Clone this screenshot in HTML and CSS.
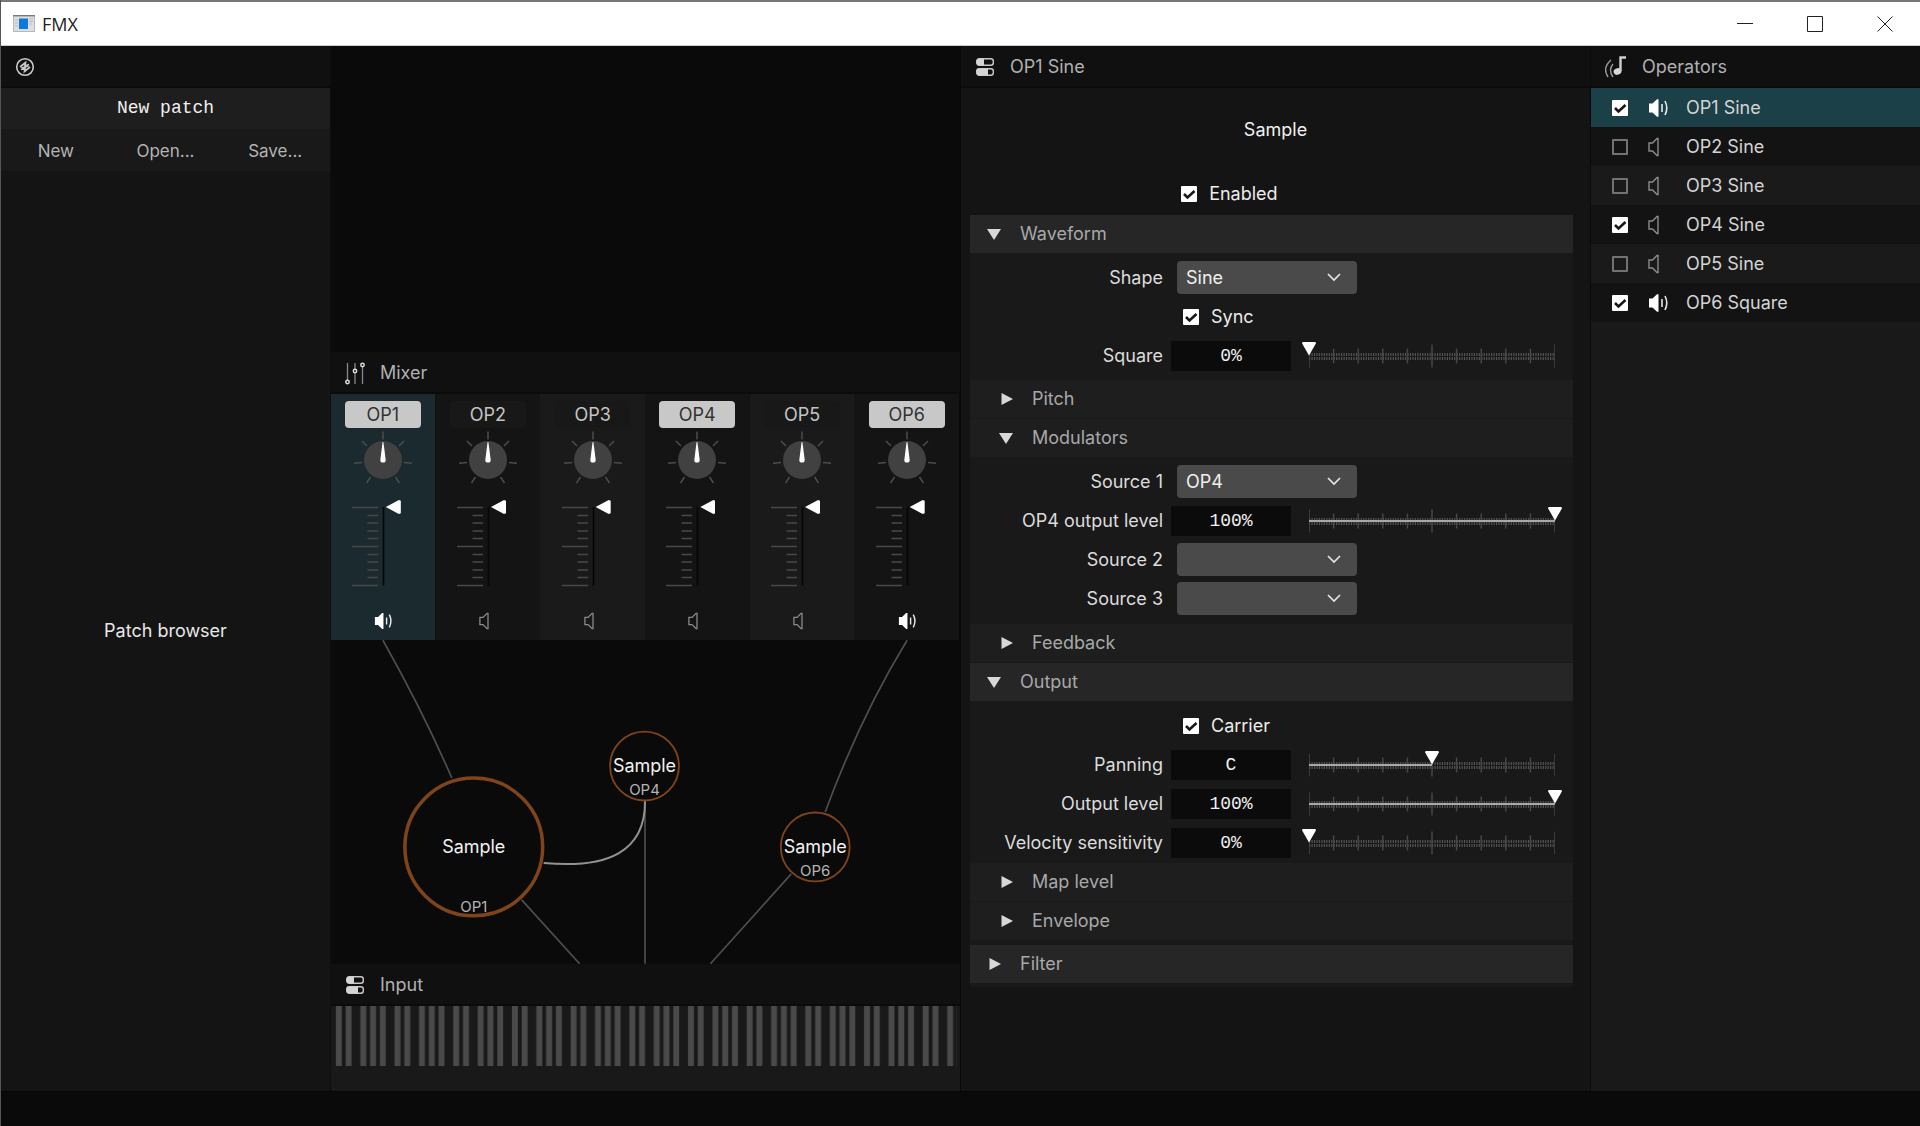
FILE: index.html
```html
<!DOCTYPE html>
<html lang="en">
<head>
<meta charset="utf-8">
<meta name="viewport" content="width=device-width, initial-scale=1">
<title>FMX</title>
<link rel="stylesheet" href="styles.css">
</head>
<body>
<svg class="defs" aria-hidden="true">
  <symbol id="speaker-on" viewBox="0 0 20 20"><path d="M1 5.500h3.500L9 1.200h1.500v17.600H9l-4.500-4.300H1z" fill="#fff"/><path d="M14 6v8M17 3q3.600 7 0 14" fill="none" stroke="#e8e8e8" stroke-width="1.600"/></symbol>
  <symbol id="speaker-off" viewBox="0 0 20 20"><path d="M1 6h3.500L9 1.500h1v17H9L4.500 14H1z" fill="none" stroke="#8c8c8c" stroke-width="1.400"/></symbol>
  <symbol id="toggles" viewBox="0 0 20 20"><rect x="1.700" y="1.700" width="16.600" height="6.600" rx="2.500" fill="none" stroke="#c8c8c8" stroke-width="1.400"/><path d="M3.500 1.700H9v6.600H3.500q-1.800 0-1.800-3.300t1.800-3.300z" fill="#d4d4d4"/><rect x="1.700" y="11.700" width="16.600" height="6.600" rx="2.500" fill="none" stroke="#c8c8c8" stroke-width="1.400"/><path d="M3.500 11.700H13v6.600H3.500q-1.800 0-1.800-3.300t1.800-3.300z" fill="#d4d4d4"/></symbol>
  <symbol id="down" viewBox="0 0 14 14"><path d="M0 2h14L7 13z" fill="#d8d8d8"/></symbol>
  <symbol id="right" viewBox="0 0 14 14"><path d="M2.500 1v12L14 7z" fill="#d8d8d8"/></symbol>
  <symbol id="knob" viewBox="0 0 60 60">
    <circle cx="30" cy="32" r="19" fill="#414141"/>
    <path d="M30 3.500v8M14 18l-5-5M46 18l5-5M9 34.500l-8 .800M51 34.500l8 .800M17.500 49l-4 6M42.500 49l4 6" stroke="#4c4c4c" stroke-width="1.500" fill="none"/>
    <path d="M29.600 14h.800L32.700 32q0 2.600-2.700 2.600T27.300 32z" fill="#fff"/>
  </symbol>
  <symbol id="fader" viewBox="0 0 35 92">
    <path d="M2 7.500h26M2 46.500h26M2 85.500h26M17.500 15.500h10.500M17.500 23h10.500M17.500 31h10.500M17.500 38.500h10.500M17.500 54.500h10.500M17.500 62h10.500M17.500 70h10.500M17.500 77.500h10.500" stroke="#484848" stroke-width="1.300"/>
    <path d="M33.500 7v78.500" stroke="#050505" stroke-width="1.600"/>
  </symbol>
  <symbol id="scale" viewBox="0 0 1000 24" preserveAspectRatio="none">
    <path d="M0 10.500H1000M0 14.500H1000" stroke="#525252" stroke-width="3" stroke-dasharray="5 5"/>
    <path d="M0 .500v23M500 .500v23M1000 .500v23M100 4.500v15M200 4.500v15M300 4.500v15M400 4.500v15M600 4.500v15M700 4.500v15M800 4.500v15M900 4.500v15" stroke="#464646" stroke-width="1.500" vector-effect="non-scaling-stroke"/>
  </symbol>
</svg>

<div class="window">
  <header class="titlebar">
    <svg class="app-icon" width="22" height="17" viewBox="0 0 22 17" aria-hidden="true"><rect x=".500" y=".500" width="21" height="16" fill="#dedede" stroke="#b8b8b8"/><path d="M0 .700h22" stroke="#777" stroke-width="1.400"/><path d="M2 5h3M2 8h3M2 11h3M16 4h4M16 6.500h4M16 9h3" stroke="#bbb"/><rect x="6" y="3.500" width="9" height="10.500" fill="#0a7adf"/></svg>
    <h1>FMX</h1>
    <div class="window-buttons">
      <button aria-label="Minimize"><svg width="16" height="16"><path d="M0 7.500h16" stroke="#222" fill="none"/></svg></button>
      <button aria-label="Maximize"><svg width="16" height="16"><path d="M.500.500h15v15h-15z" stroke="#222" fill="none"/></svg></button>
      <button aria-label="Close"><svg width="16" height="16"><path d="M.500.500l15 15M15.500.500l-15 15" stroke="#222" fill="none"/></svg></button>
    </div>
  </header>

  <main class="workspace">
    <section class="column patches" aria-label="Patches">
      <div class="panel-head"><svg width="20" height="20" viewBox="0 0 20 20" fill="none"><circle cx="10" cy="10" r="8.300" stroke="#ccc" stroke-width="1.600"/><path d="M5 10l5.500-4.500-.500 3.500 4-1.500M6 12.500l4-1.500-.500 3.500L15 10M6.500 11l7-2" stroke="#c8c8c8" stroke-width="1.700"/></svg></div>
      <div class="patch-name">New patch</div>
      <div class="patch-actions"><button>New</button><button>Open...</button><button>Save...</button></div>
      <div class="patch-browser">Patch browser</div>
    </section>

    <section class="column center">
      <div class="display"></div>
      <h2 class="panel-head"><svg width="20" height="24" viewBox="0 0 20 24" fill="none" stroke="#888" stroke-width="1.300"><path d="M2.500 2v17M10 2v6M10 12v11M17.500 6v17"/><g stroke="#ddd" stroke-width="1.500"><circle cx="2.500" cy="21" r="1.700"/><circle cx="10" cy="10" r="1.700"/><circle cx="17.500" cy="4" r="1.700"/></g></svg>Mixer</h2>
      <div class="mixer">
        <div class="channel selected"><button class="op on">OP1</button><label class="knob"><svg><use href="#knob"/></svg><input type="range" aria-label="OP1 pan"></label><div class="fader"><svg><use href="#fader"/></svg><input type="range" value="100" aria-label="OP1 level"></div><button class="mute" aria-label="OP1 output"><svg><use href="#speaker-on"/></svg></button></div>
        <div class="channel"><button class="op">OP2</button><label class="knob"><svg><use href="#knob"/></svg><input type="range" aria-label="OP2 pan"></label><div class="fader"><svg><use href="#fader"/></svg><input type="range" value="100" aria-label="OP2 level"></div><button class="mute" aria-label="OP2 output"><svg><use href="#speaker-off"/></svg></button></div>
        <div class="channel"><button class="op">OP3</button><label class="knob"><svg><use href="#knob"/></svg><input type="range" aria-label="OP3 pan"></label><div class="fader"><svg><use href="#fader"/></svg><input type="range" value="100" aria-label="OP3 level"></div><button class="mute" aria-label="OP3 output"><svg><use href="#speaker-off"/></svg></button></div>
        <div class="channel"><button class="op on">OP4</button><label class="knob"><svg><use href="#knob"/></svg><input type="range" aria-label="OP4 pan"></label><div class="fader"><svg><use href="#fader"/></svg><input type="range" value="100" aria-label="OP4 level"></div><button class="mute" aria-label="OP4 output"><svg><use href="#speaker-off"/></svg></button></div>
        <div class="channel"><button class="op">OP5</button><label class="knob"><svg><use href="#knob"/></svg><input type="range" aria-label="OP5 pan"></label><div class="fader"><svg><use href="#fader"/></svg><input type="range" value="100" aria-label="OP5 level"></div><button class="mute" aria-label="OP5 output"><svg><use href="#speaker-off"/></svg></button></div>
        <div class="channel"><button class="op on">OP6</button><label class="knob"><svg><use href="#knob"/></svg><input type="range" aria-label="OP6 pan"></label><div class="fader"><svg><use href="#fader"/></svg><input type="range" value="100" aria-label="OP6 level"></div><button class="mute" aria-label="OP6 output"><svg><use href="#speaker-on"/></svg></button></div>
      </div>
      <svg class="graph" viewBox="0 0 630 324">
        <g fill="none" stroke="#4e4e4e" stroke-width="1.700">
          <path d="M52 0Q93 73 121 138M577 0Q530 77 495 172M314.500 161v163M191 260l58 64M461 234l-81 90"/>
          <path d="M314.500 161C315 212 277 229 213 223" stroke="#929292" stroke-width="2"/>
        </g>
        <g fill="none" stroke="#80441a"><circle cx="143" cy="207" r="69" stroke-width="3.500"/><circle cx="314" cy="126" r="34.500" stroke-width="1.800"/><circle cx="485" cy="207" r="34.500" stroke-width="1.800"/></g>
        <g class="node-name"><text x="143" y="213">Sample</text><text x="314" y="132">Sample</text><text x="485" y="213">Sample</text></g>
        <g class="node-op"><text x="143" y="272">OP1</text><text x="314" y="155">OP4</text><text x="485" y="236">OP6</text></g>
      </svg>
      <h2 class="panel-head"><svg width="20" height="20"><use href="#toggles"/></svg>Input</h2>
      <div class="keyboard">
        <svg viewBox="0 0 1280 60" preserveAspectRatio="none" aria-label="Keyboard">
          <pattern id="octave" width="120" height="60" patternUnits="userSpaceOnUse"><path d="M10 0h12v60H10zM30 0h12v60H30zM60 0h12v60H60zM80 0h12v60H80zM100 0h12v60H100z" fill="#4a4a4a"/></pattern>
          <rect width="1280" height="60" fill="url(#octave)"/>
        </svg>
      </div>
    </section>

    <section class="column operator">
      <h2 class="panel-head"><svg width="20" height="20"><use href="#toggles"/></svg>OP1 Sine</h2>
      <div class="operator-name">Sample</div>
      <label class="check enabled"><input type="checkbox" checked>Enabled</label>
      <div class="sections">
        <button class="section" aria-expanded="true"><svg><use href="#down"/></svg>Waveform</button>
        <div class="fields waveform">
          <div class="row"><label for="shape">Shape</label><select id="shape"><option>Sine</option><option>Square</option></select></div>
          <div class="row"><label class="check"><input type="checkbox" checked>Sync</label></div>
          <div class="row"><label for="square">Square</label><input class="value" id="square" value="0%"><div class="slider"><svg><use href="#scale"/></svg><span class="fill" style="width:0%"></span><input type="range" value="0" aria-label="Square"></div></div>
        </div>
        <button class="section sub" aria-expanded="false"><svg><use href="#right"/></svg>Pitch</button>
        <button class="section sub" aria-expanded="true"><svg><use href="#down"/></svg>Modulators</button>
        <div class="fields modulators">
          <div class="row"><label for="source1">Source 1</label><select id="source1"><option>OP4</option></select></div>
          <div class="row"><label for="op4level">OP4 output level</label><input class="value" id="op4level" value="100%"><div class="slider"><svg><use href="#scale"/></svg><span class="fill" style="width:100%"></span><input type="range" value="100" aria-label="OP4 output level"></div></div>
          <div class="row"><label for="source2">Source 2</label><select id="source2"><option></option></select></div>
          <div class="row"><label for="source3">Source 3</label><select id="source3"><option></option></select></div>
        </div>
        <button class="section sub" aria-expanded="false"><svg><use href="#right"/></svg>Feedback</button>
        <button class="section" aria-expanded="true"><svg><use href="#down"/></svg>Output</button>
        <div class="fields output">
          <div class="row"><label class="check"><input type="checkbox" checked>Carrier</label></div>
          <div class="row"><label for="panning">Panning</label><input class="value" id="panning" value="C"><div class="slider"><svg><use href="#scale"/></svg><span class="fill" style="width:50%"></span><input type="range" value="50" aria-label="Panning"></div></div>
          <div class="row"><label for="level">Output level</label><input class="value" id="level" value="100%"><div class="slider"><svg><use href="#scale"/></svg><span class="fill" style="width:100%"></span><input type="range" value="100" aria-label="Output level"></div></div>
          <div class="row"><label for="velocity">Velocity sensitivity</label><input class="value" id="velocity" value="0%"><div class="slider"><svg><use href="#scale"/></svg><span class="fill" style="width:0%"></span><input type="range" value="0" aria-label="Velocity sensitivity"></div></div>
        </div>
        <button class="section sub" aria-expanded="false"><svg><use href="#right"/></svg>Map level</button>
        <button class="section sub" aria-expanded="false"><svg><use href="#right"/></svg>Envelope</button>
        <button class="section filter" aria-expanded="false"><svg><use href="#right"/></svg>Filter</button>
      </div>
    </section>

    <section class="column operators">
      <h2 class="panel-head"><svg width="22" height="24" viewBox="0 0 22 24"><ellipse cx="12.500" cy="16.500" rx="4" ry="3.200" transform="rotate(-20 12.500 16.500)" fill="#d8d8d8"/><path d="M15.500 16V2.500H21" fill="none" stroke="#d0d0d0" stroke-width="2.400"/><path d="M8 9q-5 6 0 13M6 5q-9 8-3 17" fill="none" stroke="#999" stroke-width="1.400"/></svg>Operators</h2>
      <ul>
        <li class="selected"><label class="check"><input type="checkbox" checked><svg><use href="#speaker-on"/></svg>OP1 Sine</label></li>
        <li><label class="check"><input type="checkbox"><svg><use href="#speaker-off"/></svg>OP2 Sine</label></li>
        <li><label class="check"><input type="checkbox"><svg><use href="#speaker-off"/></svg>OP3 Sine</label></li>
        <li><label class="check"><input type="checkbox" checked><svg><use href="#speaker-off"/></svg>OP4 Sine</label></li>
        <li><label class="check"><input type="checkbox"><svg><use href="#speaker-off"/></svg>OP5 Sine</label></li>
        <li><label class="check"><input type="checkbox" checked><svg><use href="#speaker-on"/></svg>OP6 Square</label></li>
      </ul>
    </section>
  </main>
  <footer class="status"></footer>
</div>
</body>
</html>
```
FILE: styles.css
```css
* { box-sizing: border-box; }
body {
  margin: 0;
  background: #0a0a0a;
  color: #dcdcdc;
  font: 18px/24px Inter, sans-serif;
}
button, input, select { font: inherit; color: inherit; margin: 0; }
button { border: 0; padding: 0; background: none; }
h1, h2, ul { margin: 0; padding: 0; font: inherit; list-style: none; }
svg { display: block; flex: none; }
.defs { position: absolute; width: 0; height: 0; }

.window {
  display: flex;
  flex-direction: column;
  min-height: 100vh;
  border-left: 1px solid #555;
}
.titlebar {
  display: flex;
  align-items: center;
  gap: 7px;
  height: 46px;
  padding-left: 12px;
  background: #fff;
  border-top: 2px solid #777;
  border-bottom: 1px solid #ccc;
  color: #222;
  font: 18px/24px "Open Sans", sans-serif;
}
.window-buttons { display: flex; margin-left: auto; }
.window-buttons button { display: grid; place-items: center; width: 70px; height: 42px; }

.workspace {
  flex: 1;
  display: grid;
  grid-template-columns: 330fr 630fr 630fr 329fr;
}
.column { display: flex; flex-direction: column; min-width: 0; background: #141414; }
.panel-head {
  display: flex;
  align-items: center;
  gap: 15px;
  height: 42px;
  padding: 2px 14px 0;
  background: #101010;
  border-bottom: 2px solid #0b0b0b;
  color: #b0b0b0;
}

.patches { border-right: 1px solid #0e0e0e; }
.patch-name {
  background: #1e1e1e;
  font: 18px/41px "Liberation Mono", monospace;
  text-align: center;
  color: #f0f0f0;
}
.patch-actions { display: grid; grid-template-columns: repeat(3, 1fr); background: #191919; }
.patch-actions button { height: 42px; padding-top: 2px; color: #b4b4b4; font-size: 17px; }
.patch-browser { flex: 1; display: grid; place-items: center; color: #e8e8e8; }

.center { background: #0a0a0a; border-right: 1px solid #080808; }
.display { height: 306px; }
.mixer {
  display: grid;
  grid-template-columns: repeat(6, 1fr);
  height: 246px;
  padding-right: 1px;
}
.channel {
  display: flex;
  flex-direction: column;
  align-items: center;
  padding-top: 7px;
  background: #141414;
}
.channel:nth-child(odd) { background: #1a1a1a; }
.channel.selected { background: #1a2a2f; border-right: 1px solid #101010; }
.op { width: 76px; height: 27px; border-radius: 4px; background: #181818; color: #c4c4c4; }
.op.on { background: #c8c8c8; color: #333; }
.knob { display: grid; width: 60px; height: 60px; }
.knob svg, .knob input { grid-area: 1 / 1; width: 60px; height: 60px; }
.knob input { opacity: 0; }
.fader { display: flex; width: 66px; height: 92px; margin-top: 12px; gap: 1px; }
.fader svg { width: 35px; height: 92px; }
.fader input {
  appearance: none;
  writing-mode: vertical-lr;
  direction: rtl;
  width: 15px;
  height: 92px;
  background: none;
}
.fader input::-webkit-slider-thumb {
  appearance: none;
  width: 15px;
  height: 14px;
  background: #fff;
  clip-path: polygon(0 50%, 87% 0, 100% 6%, 100% 94%, 87% 100%);
}
.mute { margin-top: 20px; }
.mute svg { width: 18px; height: 18px; }

.graph { flex: 1; width: 100%; min-height: 324px; }
.graph text { text-anchor: middle; }
.node-name { fill: #f2f2f2; font-size: 18px; }
.node-op { fill: #b4b4b4; font-size: 15px; }
.keyboard { height: 85px; padding-right: 3px; background: #191919; }
.keyboard svg { width: 100%; height: 60px; }

.operator { border-right: 1px solid #0a0a0a; }
.operator-name { padding: 30px 0 40px; text-align: center; color: #f0f0f0; }
.check { display: flex; align-items: center; color: #ececec; }
.check input {
  appearance: none;
  width: 16px;
  height: 16px;
  margin-right: 12px;
  border: 2px solid #727272;
  border-radius: 1px;
}
.check input:checked {
  border: 0;
  background: #fff url("data:image/svg+xml,%3Csvg xmlns='http://www.w3.org/2000/svg' width='16' height='16'%3E%3Cpath d='M3 8l3.500 3.500L13.500 5' fill='none' stroke='%23181818' stroke-width='2.600'/%3E%3C/svg%3E");
}
.enabled { align-self: flex-start; margin: 0 0 9px 35%; height: 24px; }
.sections { margin: 0 17px 0 9px; background: #191919; padding-bottom: 3px; }
.section {
  display: flex;
  align-items: center;
  gap: 19px;
  width: 100%;
  height: 38px;
  margin-bottom: 1px;
  padding-left: 17px;
  background: #262626;
  color: #a8a8a8;
}
.section svg { width: 14px; height: 14px; }
.section.sub { padding-left: 29px; background: #1e1e1e; }
.section.filter { margin-top: 5px; }
.waveform { padding: 4px 0 5px; }
.modulators { padding: 4px 0 6px; }
.output { padding: 4px 0 1px; }
.row {
  display: grid;
  grid-template-columns: 193px 120px 1fr;
  column-gap: 8px;
  align-items: center;
  height: 39px;
  padding-right: 18px;
}
.row > label { text-align: right; }
.row > .check { grid-column: 2 / -1; margin-left: 12px; }
.row select {
  appearance: none;
  grid-column: 2 / -1;
  width: 180px;
  height: 33px;
  margin-left: 6px;
  padding: 0 9px;
  border: 0;
  border-radius: 4px;
  color: #f0f0f0;
  background: #4a4a4a url("data:image/svg+xml,%3Csvg xmlns='http://www.w3.org/2000/svg' width='14' height='9'%3E%3Cpath d='M1 1l6 6 6-6' fill='none' stroke='%23e4e4e4' stroke-width='1.7'/%3E%3C/svg%3E") no-repeat right 16px center;
}
.value {
  width: 120px;
  height: 30px;
  border: 0;
  background: #0b0b0b;
  color: #f0f0f0;
  font: 18px/30px "Liberation Mono", monospace;
  text-align: center;
}
.slider { display: grid; align-items: center; margin-left: 10px; height: 28px; }
.slider > * { grid-area: 1 / 1; }
.slider svg { width: 100%; height: 24px; overflow: visible; }
.fill { height: 2px; background: #a8a8a8; }
.slider input {
  appearance: none;
  align-self: start;
  width: calc(100% + 14px);
  height: 14px;
  margin-left: -7px;
  background: none;
}
.slider input::-webkit-slider-thumb {
  appearance: none;
  width: 14px;
  height: 14px;
  background: #fff;
  clip-path: polygon(6% 0, 94% 0, 100% 12%, 50% 100%, 0 12%);
}

.operators { background: #191919; }
.operators li { display: flex; height: 39px; padding-left: 21px; background: #1a1a1a; }
.operators li:nth-child(even) { background: #131313; }
.operators li.selected { background: #1c4048; }
.operators .check { flex: 1; color: #d4d4d4; }
.operators .check input { margin-right: 20px; }
.operators .check svg { width: 20px; height: 20px; margin-right: 18px; }

.status { height: 35px; background: #0a0a0a; border-top: 1px solid #060606; }
```
